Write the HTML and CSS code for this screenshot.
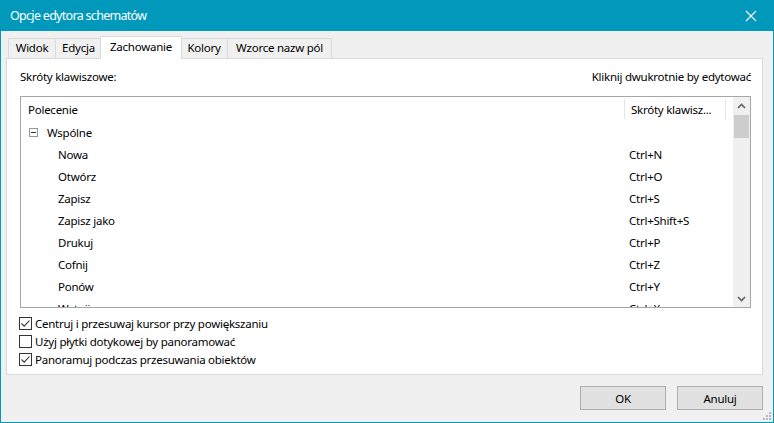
FILE: index.html
```html
<!DOCTYPE html>
<html lang="pl">
<head>
<meta charset="utf-8">
<title>Opcje edytora schematów</title>
<link rel="stylesheet" href="styles.css">
</head>
<body>
<div class="window">
  <div class="titlebar">
    <span class="title">Opcje edytora schematów</span>
    <svg class="close" width="12" height="12" viewBox="0 0 12 12"><path d="M1 1 L11 11 M11 1 L1 11" stroke="#fff" stroke-width="1.2" fill="none"/></svg>
  </div>
  <div class="client">
    <div class="tabs">
      <div class="tab t-widok">Widok</div>
      <div class="tab t-edycja">Edycja</div>
      <div class="tab tab-active t-zach">Zachowanie</div>
      <div class="tab t-kolory">Kolory</div>
      <div class="tab t-wzorce">Wzorce nazw pól</div>
    </div>
    <div class="panel">
      <div class="label-row">
        <span>Skróty klawiszowe:</span>
        <span>Kliknij dwukrotnie by edytować</span>
      </div>
      <div class="list">
        <div class="list-content">
          <div class="header">
            <div class="col1 hcell">Polecenie</div>
            <div class="col2 hcell">Skróty klawisz...</div>
            <div class="col3"></div>
          </div>
          <div class="row group">
            <div class="col1"><span class="expander"></span>Wspólne</div>
            <div class="col2"></div>
          </div>
          <div class="row"><div class="col1 child">Nowa</div><div class="col2 sc">Ctrl+N</div></div>
          <div class="row"><div class="col1 child">Otwórz</div><div class="col2 sc">Ctrl+O</div></div>
          <div class="row"><div class="col1 child">Zapisz</div><div class="col2 sc">Ctrl+S</div></div>
          <div class="row"><div class="col1 child">Zapisz jako</div><div class="col2 sc">Ctrl+Shift+S</div></div>
          <div class="row"><div class="col1 child">Drukuj</div><div class="col2 sc">Ctrl+P</div></div>
          <div class="row"><div class="col1 child">Cofnij</div><div class="col2 sc">Ctrl+Z</div></div>
          <div class="row"><div class="col1 child">Ponów</div><div class="col2 sc">Ctrl+Y</div></div>
          <div class="row"><div class="col1 child">Wytnij</div><div class="col2 sc">Ctrl+X</div></div>
        </div>
        <div class="scrollbar">
          <div class="sb-btn">
            <svg width="9" height="6" viewBox="0 0 9 6"><path d="M1 5 L4.5 1.5 L8 5" stroke="#606060" stroke-width="1.6" fill="none"/></svg>
          </div>
          <div class="sb-track"><div class="sb-thumb"></div></div>
          <div class="sb-btn">
            <svg width="9" height="6" viewBox="0 0 9 6"><path d="M1 1 L4.5 4.5 L8 1" stroke="#606060" stroke-width="1.6" fill="none"/></svg>
          </div>
        </div>
      </div>
      <div class="checks">
        <label class="check"><span class="box checked"><svg width="11" height="11" viewBox="0 0 11 11"><path d="M1.5 5.5 L4.2 8.2 L9.5 2.5" stroke="#333" stroke-width="1.1" fill="none"/></svg></span>Centruj i przesuwaj kursor przy powiększaniu</label>
        <label class="check"><span class="box"></span>Użyj płytki dotykowej by panoramować</label>
        <label class="check"><span class="box checked"><svg width="11" height="11" viewBox="0 0 11 11"><path d="M1.5 5.5 L4.2 8.2 L9.5 2.5" stroke="#333" stroke-width="1.1" fill="none"/></svg></span>Panoramuj podczas przesuwania obiektów</label>
      </div>
    </div>
    <div class="buttons">
      <div class="btn">OK</div>
      <div class="btn">Anuluj</div>
    </div>
    <svg class="grip" width="8" height="8" viewBox="0 0 8 8">
      <rect x="6" y="0" width="2" height="2" fill="#b8b8b8"/>
      <rect x="3" y="3" width="2" height="2" fill="#b8b8b8"/>
      <rect x="6" y="3" width="2" height="2" fill="#b8b8b8"/>
      <rect x="0" y="6" width="2" height="2" fill="#b8b8b8"/>
      <rect x="3" y="6" width="2" height="2" fill="#b8b8b8"/>
      <rect x="6" y="6" width="2" height="2" fill="#b8b8b8"/>
    </svg>
  </div>
</div>
</body>
</html>
```
FILE: styles.css
```css
* { box-sizing: border-box; }
html, body {
  margin: 0;
  padding: 0;
}
body {
  width: 774px;
  height: 423px;
  overflow: hidden;
  font-family: "Noto Sans", "Liberation Sans", sans-serif;
  font-size: 11.5px;
  letter-spacing: -0.25px;
  color: #000;
  background: #0099bc;
}
.window {
  width: 774px;
  height: 423px;
  display: flex;
  flex-direction: column;
  border: 1px solid #0099bc;
  border-top: none;
}
.titlebar {
  height: 31px;
  flex: none;
  background: #0099bc;
  color: #fff;
  display: flex;
  align-items: center;
  justify-content: space-between;
  padding: 0 16px 0 9px;
}
.title {
  font-size: 12.5px;
  letter-spacing: -0.7px;
  line-height: 31px;
}
.close { display: block; }
.client {
  flex: 1;
  background: #f0f0f0;
  position: relative;
  display: flex;
  flex-direction: column;
  padding: 5px 10px 0 5px;
}
.tabs {
  display: flex;
  align-items: flex-end;
  height: 22px;
  padding-left: 2px;
  position: relative;
  z-index: 1;
}
.tab {
  height: 20px;
  line-height: 18px;
  border: 1px solid #d9d9d9;
  border-bottom: none;
  background: #f0f0f0;
  text-align: center;
  margin-right: -1px;
  white-space: nowrap;
}
.t-widok { width: 48px; }
.t-edycja { width: 47px; }
.t-zach { width: 81px; }
.t-kolory { width: 48px; }
.t-wzorce { width: 105px; }
.tab-active {
  height: 23px;
  line-height: 20px;
  background: #fff;
  margin-bottom: -1px;
  margin-left: -1px;
  margin-right: -2px;
  width: 82px;
  position: relative;
  z-index: 2;
}
.panel {
  height: 317px;
  flex: none;
  background: #fff;
  border: 1px solid #d9d9d9;
  padding: 0 11px 0 13px;
  display: flex;
  flex-direction: column;
}
.label-row {
  display: flex;
  justify-content: space-between;
  height: 17px;
  line-height: 17px;
  margin-top: 9px;
}
.list {
  margin-top: 11px;
  height: 212px;
  border: 1px solid #a6a6a6;
  display: flex;
  overflow: hidden;
}
.list-content {
  flex: 1;
  overflow: hidden;
}
.header {
  display: flex;
  height: 24px;
  align-items: stretch;
}
.col1 { width: 604px; flex: none; display: flex; align-items: center; }
.col2 { width: 101px; flex: none; display: flex; align-items: center; white-space: nowrap; }
.col3 { flex: 1; }
.hcell {
  padding-left: 7px;
  border-right: 1px solid #e5e5e5;
  margin: 2px 0;
}
.header .col2 { padding-left: 6px; }
.row {
  display: flex;
  height: 22px;
}
.group .col1 { padding-left: 8px; }
.expander {
  width: 9px;
  height: 9px;
  border: 1px solid #969696;
  position: relative;
  margin-right: 9px;
  flex: none;
}
.expander::after {
  content: "";
  position: absolute;
  left: 1px;
  top: 3px;
  width: 5px;
  height: 1px;
  background: #333;
}
.child { padding-left: 37px; }
.sc { padding-left: 4px; }
.scrollbar {
  width: 17px;
  flex: none;
  background: #f0f0f0;
  display: flex;
  flex-direction: column;
}
.sb-btn {
  height: 17px;
  display: flex;
  align-items: center;
  justify-content: center;
}
.sb-track {
  flex: 1;
  padding: 1px;
}
.sb-thumb {
  height: 23px;
  background: #cdcdcd;
}
.checks {
  margin-top: 7px;
  display: flex;
  flex-direction: column;
  gap: 1px;
}
.check {
  display: flex;
  align-items: center;
  height: 17px;
  white-space: nowrap;
}
.box {
  width: 13px;
  height: 13px;
  border: 1px solid #333;
  background: #fff;
  margin-right: 3px;
  display: flex;
  align-items: center;
  justify-content: center;
  flex: none;
  margin-left: -1px;
}
.box svg { display: block; }
.buttons {
  display: flex;
  justify-content: flex-end;
  gap: 11px;
  margin-top: 11px;
}
.btn {
  width: 86px;
  height: 24px;
  background: #e1e1e1;
  border: 1px solid #adadad;
  display: flex;
  align-items: center;
  justify-content: center;
}
.grip {
  position: absolute;
  right: 2px;
  bottom: 2px;
}
```
